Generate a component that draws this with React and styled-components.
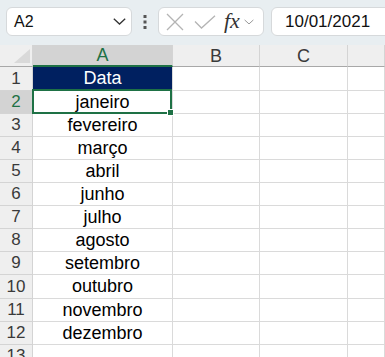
import React from "react";
import styled, { createGlobalStyle, css } from "styled-components";

const GREEN = "#1e7145";

const Global = createGlobalStyle`
  html, body { margin: 0; padding: 0; background: #fff; overflow: hidden; }
  body { font-family: "Liberation Sans", Arial, sans-serif; }
  * { box-sizing: border-box; }
`;

const Page = styled.div`
  width: 385px;
  height: 357px;
  overflow: hidden;
  display: flex;
  flex-direction: column;
`;

const Toolbar = styled.div`
  display: flex;
  align-items: center;
  height: 45px;
  padding: 7px 0 9px 6px;
  background: #e8eef1;
  flex: none;
`;

const Box = styled.div`
  height: 29px;
  background: #fff;
  border: 1px solid #d6d9db;
  border-radius: 6px;
  display: flex;
  align-items: center;
`;

const NameBox = styled(Box)`
  width: 126px;
  padding: 0 5px 0 7px;
  justify-content: space-between;
  font-size: 16px;
  color: #111;
`;

const DotsSlot = styled.div`
  width: 26px;
  display: flex;
  justify-content: center;
`;

const ToolsBox = styled(Box)`
  width: 106px;
  padding: 0 0 0 7px;
`;

const Fx = styled.span`
  font-family: "Liberation Serif", "Times New Roman", serif;
  font-style: italic;
  font-size: 22px;
  color: #333;
  margin-left: 8px;
  line-height: 1;
  margin-top: -2px;
`;

const ValueBox = styled(Box)`
  flex: 1;
  margin-left: 7px;
  margin-right: -12px;
  padding-left: 13px;
  font-size: 17px;
  color: #111;
`;

const Sheet = styled.div`
  display: grid;
  grid-template-columns: 33px 140px 87px 88px 1fr;
  grid-template-rows: 22px 24px repeat(8, 23px) 24px repeat(3, 23px);
  flex: none;
`;

const Corner = styled.div`
  background: #efefef;
  border-right: 1px solid #d4d4d4;
  border-bottom: 1px solid #a8a8a8;
  display: flex;
  align-items: flex-end;
  justify-content: flex-end;
  padding: 0 2px 3px 0;
`;

const ColHeader = styled.div`
  background: ${(p) => (p.$active ? "#d3d3d3" : "#efefef")};
  color: ${(p) => (p.$active ? GREEN : "#3a3a3a")};
  border-right: 1px solid #d4d4d4;
  border-bottom: ${(p) => (p.$active ? `2px solid ${GREEN}` : "1px solid #a8a8a8")};
  font-size: 18px;
  display: flex;
  align-items: center;
  justify-content: center;
  padding-top: 1px;
`;

const RowHeader = styled.div`
  background: ${(p) => (p.$active ? "#d3d3d3" : "#efefef")};
  color: ${(p) => (p.$active ? GREEN : "#3a3a3a")};
  border-right: 1px solid #d4d4d4;
  border-bottom: 1px solid #d4d4d4;
  font-size: 17px;
  display: flex;
  align-items: center;
  justify-content: center;
`;

const Cell = styled.div`
  position: relative;
  border-right: 1px solid #dadada;
  border-bottom: 1px solid #dadada;
  font-size: 18px;
  color: #000;
  display: flex;
  align-items: center;
  justify-content: center;
  white-space: nowrap;
  ${(p) =>
    p.$fill &&
    css`
      background: #002060;
      color: #fff;
    `}
  ${(p) =>
    p.$selected &&
    css`
      z-index: 2;
      &::before {
        content: "";
        position: absolute;
        top: -2px;
        left: -1px;
        right: 0;
        bottom: -1px;
        border: 2px solid ${GREEN};
        pointer-events: none;
      }
    `}
`;

const Handle = styled.span`
  position: absolute;
  right: -2px;
  bottom: -3px;
  width: 7px;
  height: 7px;
  background: ${GREEN};
  border: 1px solid #fff;
`;

const months = [
  "janeiro",
  "fevereiro",
  "março",
  "abril",
  "junho",
  "julho",
  "agosto",
  "setembro",
  "outubro",
  "novembro",
  "dezembro",
];

const Chevron = ({ w = 13, h = 7, color = "#333" }) => (
  <svg width={w} height={h} viewBox="0 0 13 7" fill="none">
    <path d="M0.8 0.8 L6.5 6 L12.2 0.8" stroke={color} strokeWidth="1.3" />
  </svg>
);

export default function App() {
  const rows = [{ text: "Data", fill: true }, ...months.map((m) => ({ text: m })), { text: "" }];
  return (
    <Page>
      <Global />
      <Toolbar>
        <NameBox>
          <span>A2</span>
          <Chevron />
        </NameBox>
        <DotsSlot>
          <svg width="4" height="14" viewBox="0 0 4 14">
            <rect x="0.5" y="0" width="3" height="3" fill="#555" />
            <rect x="0.5" y="5.5" width="3" height="3" fill="#555" />
            <rect x="0.5" y="11" width="3" height="3" fill="#555" />
          </svg>
        </DotsSlot>
        <ToolsBox>
          <svg width="18" height="18" viewBox="0 0 18 18" fill="none">
            <path d="M1 1 L17 17 M17 1 L1 17" stroke="#b4b4b4" strokeWidth="1.3" />
          </svg>
          <svg width="22" height="14" viewBox="0 0 22 14" fill="none" style={{ marginLeft: 10 }}>
            <path d="M1 6.5 L7.5 13 L21 0.8" stroke="#b4b4b4" strokeWidth="1.3" />
          </svg>
          <Fx>fx</Fx>
          <span style={{ marginLeft: 4, display: "flex" }}>
            <Chevron w={10} h={6} color="#999" />
          </span>
        </ToolsBox>
        <ValueBox>10/01/2021</ValueBox>
      </Toolbar>
      <Sheet>
        <Corner>
          <svg width="16" height="14" viewBox="0 0 16 14">
            <polygon points="16,0 16,14 0,14" fill="#d9d9d9" />
          </svg>
        </Corner>
        <ColHeader $active>A</ColHeader>
        <ColHeader>B</ColHeader>
        <ColHeader>C</ColHeader>
        <ColHeader />
        {rows.map((r, i) => (
          <React.Fragment key={i}>
            <RowHeader $active={i === 1}>{i + 1}</RowHeader>
            <Cell $fill={r.fill} $selected={i === 1}>
              {r.text}
              {i === 1 && <Handle />}
            </Cell>
            <Cell />
            <Cell />
            <Cell />
          </React.Fragment>
        ))}
      </Sheet>
    </Page>
  );
}
